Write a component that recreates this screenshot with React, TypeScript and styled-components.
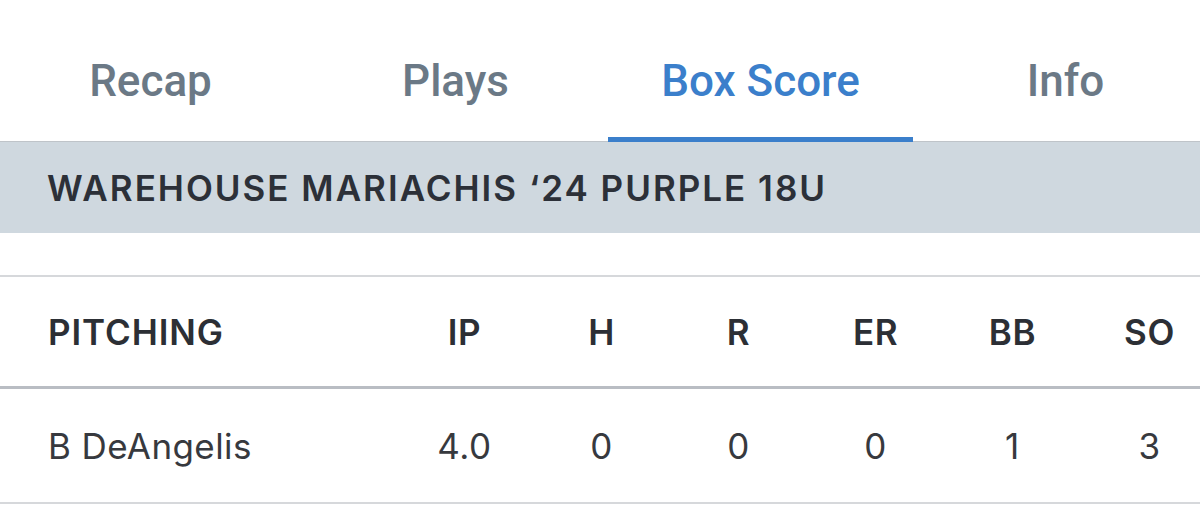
import React from "react";
import styled, { createGlobalStyle } from "styled-components";

const GlobalStyle = createGlobalStyle`
  html, body {
    margin: 0;
    padding: 0;
    background: #ffffff;
    overflow: hidden;
  }
  body {
    font-family: Inter, Roboto, "Liberation Sans", Arial, sans-serif;
    -webkit-font-smoothing: antialiased;
  }
`;

const tabs = ["Recap", "Plays", "Box Score", "Info"];
const activeTab = "Box Score";

const columns = ["IP", "H", "R", "ER", "BB", "SO"];
const pitchers = [{ name: "B DeAngelis", stats: ["4.0", "0", "0", "0", "1", "3"] }];

const App: React.FC = () => {
  return (
    <>
      <GlobalStyle />
      <Page>
        <TabBar>
          {tabs.map((t) => (
            <Tab key={t} $active={t === activeTab}>
              {t}
            </Tab>
          ))}
        </TabBar>
        <TeamBand>WAREHOUSE MARIACHIS ‘24 PURPLE 18U</TeamBand>
        <Table>
          <HeadRow>
            <NameCell $head>PITCHING</NameCell>
            {columns.map((c) => (
              <StatCell key={c} $head>
                {c}
              </StatCell>
            ))}
          </HeadRow>
          {pitchers.map((p) => (
            <DataRow key={p.name}>
              <NameCell>{p.name}</NameCell>
              {p.stats.map((s, i) => (
                <StatCell key={i}>{s}</StatCell>
              ))}
            </DataRow>
          ))}
        </Table>
      </Page>
    </>
  );
};

const Page = styled.div`
  width: 1220px;
  margin-left: -2px;
`;

const TabBar = styled.div`
  display: grid;
  grid-template-columns: repeat(4, 305px);
  border-bottom: 1px solid #bfc4c9;
`;

const Tab = styled.div<{ $active?: boolean }>`
  height: 142px;
  padding-top: 53px;
  box-sizing: border-box;
  text-align: center;
  font-family: Roboto, "Liberation Sans", Arial, sans-serif;
  font-size: 44px;
  line-height: 56px;
  font-weight: 500;
  color: ${(p) => (p.$active ? "#3b7fcb" : "#6b7986")};
  border-bottom: 5px solid ${(p) => (p.$active ? "#3b7fcb" : "transparent")};
  margin-bottom: -1px;
`;

const TeamBand = styled.div`
  height: 91px;
  display: flex;
  align-items: center;
  padding-left: 49px;
  background: #cfd8df;
  color: #2c3038;
  font-size: 35px;
  font-weight: 600;
  letter-spacing: 2px;
`;

const Table = styled.div`
  margin-top: 42px;
  border-top: 2px solid #d6d8db;
`;

const Row = styled.div`
  display: grid;
  grid-template-columns: 1fr repeat(6, 137px);
  align-items: center;
`;

const HeadRow = styled(Row)`
  height: 109px;
  border-bottom: 3px solid #b9bdc3;
`;

const DataRow = styled(Row)`
  height: 113px;
  border-bottom: 2px solid #d6d8db;
`;

const NameCell = styled.div<{ $head?: boolean }>`
  padding-left: 50px;
  font-size: 35px;
  font-weight: ${(p) => (p.$head ? 600 : 400)};
  letter-spacing: ${(p) => (p.$head ? "0.9px" : "0.4px")};
  color: ${(p) => (p.$head ? "#2c2f35" : "#37393e")};
`;

const StatCell = styled.div<{ $head?: boolean }>`
  text-align: center;
  font-size: 35px;
  font-weight: ${(p) => (p.$head ? 600 : 400)};
  letter-spacing: 0.6px;
  color: ${(p) => (p.$head ? "#2c2f35" : "#37393e")};
`;

export default App;
